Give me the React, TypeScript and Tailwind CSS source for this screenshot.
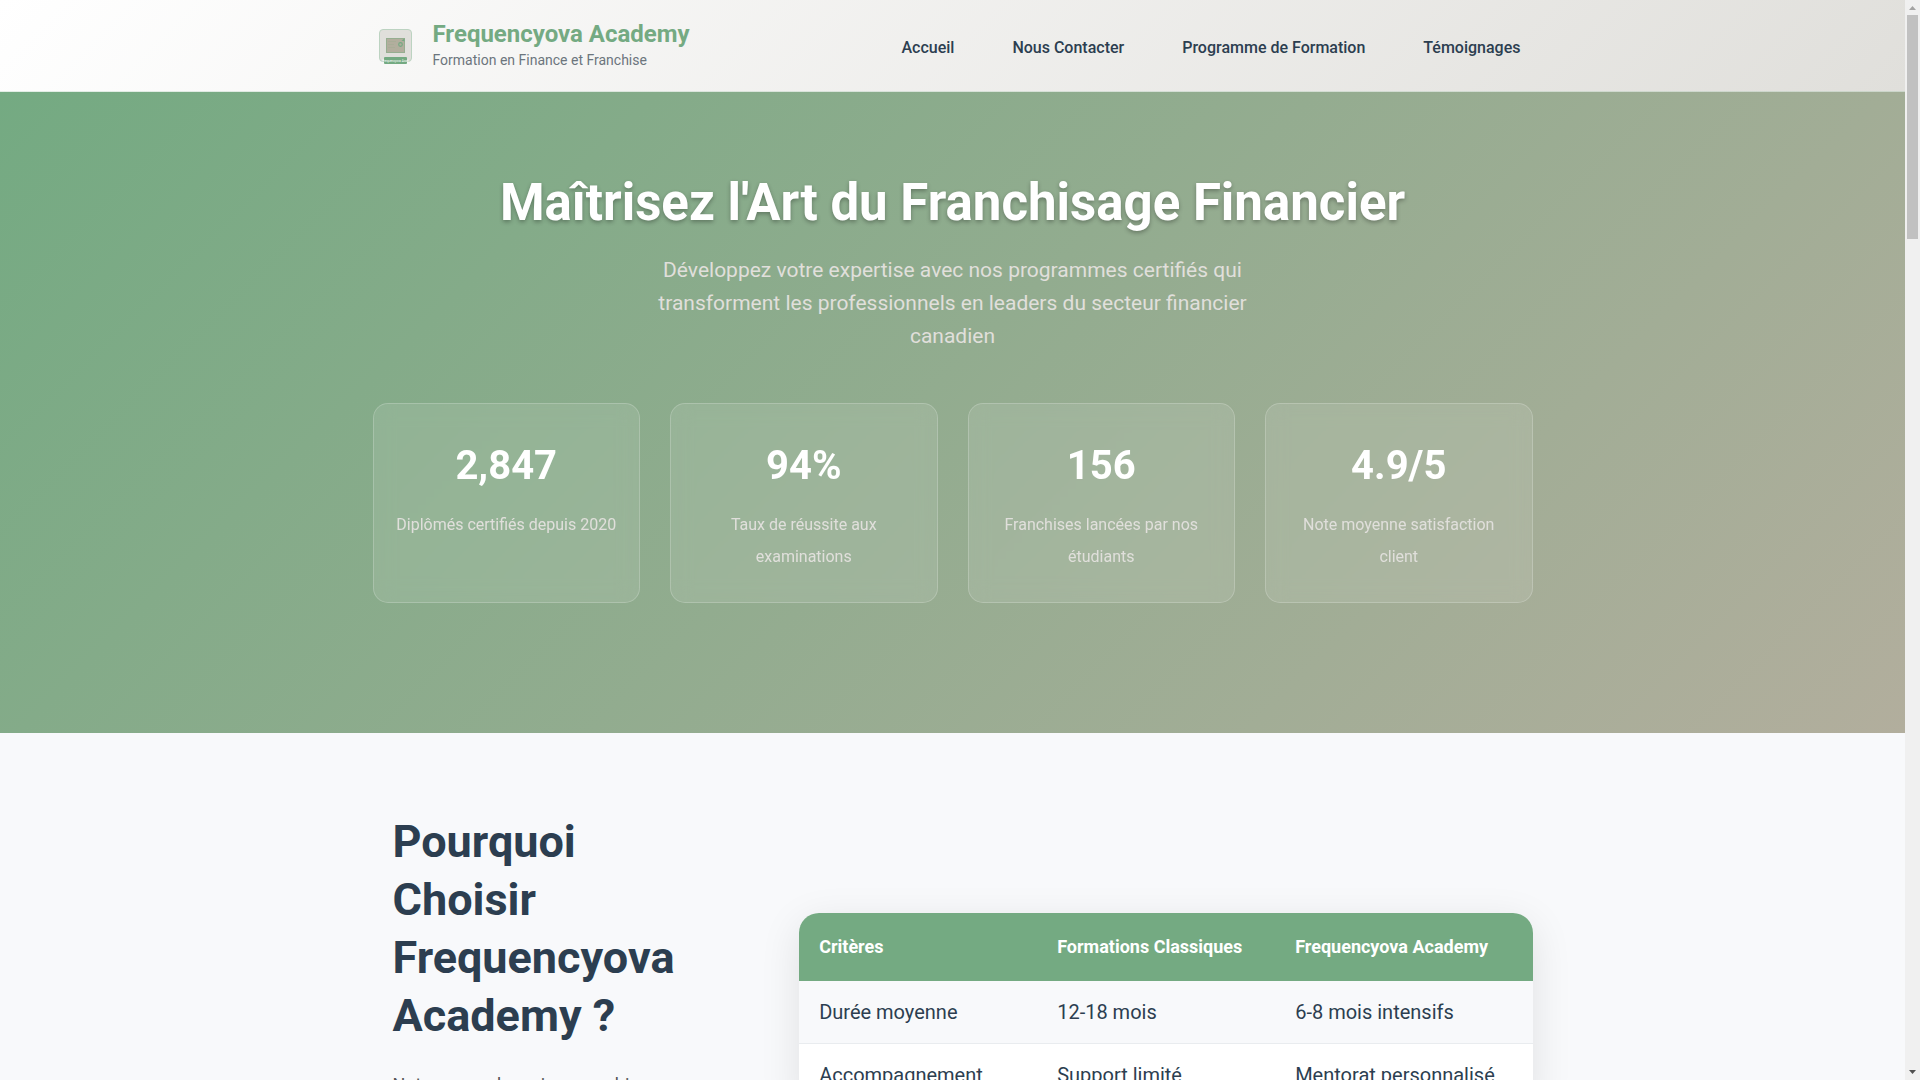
const navLinks = [
  { name: "Accueil", link: "#accueil" },
  { name: "Nous Contacter", link: "#contact" },
  { name: "Programme de Formation", link: "#programme" },
  { name: "Témoignages", link: "#temoignages" },
];

const stats = [
  { value: "2,847", label: "Diplômés certifiés depuis 2020" },
  { value: "94%", label: "Taux de réussite aux examinations" },
  { value: "156", label: "Franchises lancées par nos étudiants" },
  { value: "4.9/5", label: "Note moyenne satisfaction client" },
];

const rows = [
  ["Durée moyenne", "12-18 mois", "6-8 mois intensifs"],
  ["Accompagnement", "Support limité", "Mentorat personnalisé"],
];

const Logo = () => (
  <svg viewBox="0 0 45 45" className="h-[45px] w-[45px] shrink-0" aria-hidden="true">
    <rect x="6.5" y="6.5" width="32" height="32" rx="3.5" fill="#e0dfdb" stroke="#bcd3c1" />
    <rect x="13.5" y="15.5" width="18" height="14" fill="#b2ae9d" stroke="#96ae90" />
    <path d="M15 18.5h8M15 21.5h6M15 24.5h7" stroke="#a2ad94" strokeWidth="0.6" />
    <circle cx="27.5" cy="21.5" r="1.8" fill="#b2ae9d" stroke="#74aa82" strokeWidth="1.2" />
    <path d="M28.5 17.5l3-2v3z" fill="#74aa82" />
    <rect x="11" y="34" width="23" height="7" rx="1" fill="#74aa82" />
    <text
      x="22.5"
      y="38.5"
      textAnchor="middle"
      fontSize="3"
      fill="#ffffff"
      fontFamily="Roboto, sans-serif"
    >
      Frequencyova Acad
    </text>
  </svg>
);

const Header = () => {
  return (
    <header className="border-b border-[#74aa82]/20 bg-linear-[135deg,#ffffff,#e0dfdb]">
      <div className="mx-auto flex max-w-[1200px] items-center justify-between px-5 py-5">
        <a href="#accueil" className="flex items-center gap-[15px]">
          <Logo />
          <div>
            <p className="text-2xl leading-[29px] font-bold text-[#74aa82]">
              Frequencyova Academy
            </p>
            <p className="text-sm leading-[22px] text-[#6c757d]">
              Formation en Finance et Franchise
            </p>
          </div>
        </a>
        <nav className="flex gap-[34px] pt-1">
          {navLinks.map((item) => (
            <a
              key={item.name}
              href={item.link}
              className="px-3 text-base font-medium text-[#2c3e50]"
            >
              {item.name}
            </a>
          ))}
        </nav>
      </div>
    </header>
  );
};

const Hero = () => {
  return (
    <section className="bg-linear-[135deg,#74aa82,#b2ae9d] pt-20 pb-[130px] text-center">
      <div className="mx-auto max-w-[1200px] px-5">
        <h1 className="mb-5 text-[51px] leading-[62px] font-bold text-white text-shadow-[0_2px_4px_rgba(0,0,0,0.3)]">
          Maîtrisez l'Art du Franchisage Financier
        </h1>
        <p className="mx-auto mb-[50px] max-w-[600px] text-[21px] leading-[33px] text-[#e0dfdb]">
          Développez votre expertise avec nos programmes certifiés qui
          transforment les professionnels en leaders du secteur financier
          canadien
        </p>
        <div className="grid grid-cols-4 gap-[30px]">
          {stats.map((item) => (
            <div
              key={item.value}
              className="rounded-[15px] border border-white/20 bg-white/10 px-5 pt-[30px] pb-[29px] backdrop-blur-[10px]"
            >
              <p className="mb-[11px] text-[40px] leading-16 font-bold text-white">
                {item.value}
              </p>
              <p className="text-base leading-8 text-[#e0dfdb]">{item.label}</p>
            </div>
          ))}
        </div>
      </div>
    </section>
  );
};

const Comparison = () => {
  return (
    <section className="py-20">
      <div className="mx-auto grid max-w-[1200px] grid-cols-[1fr_2fr] items-start gap-[60px] px-5">
        <div className="px-5">
          <h2 className="mb-6 text-[45px] leading-[58px] font-bold">
            Pourquoi Choisir Frequencyova Academy ?
          </h2>
          <p className="text-lg leading-8 text-[#555555]">
            Notre approche unique combine
          </p>
        </div>
        <div className="mt-[100px] overflow-hidden rounded-[20px] bg-white shadow-[0_10px_40px_rgba(0,0,0,0.1)]">
          <table className="w-full table-fixed text-left">
            <thead className="bg-[#74aa82] text-lg leading-7 text-white">
              <tr>
                <th className="w-[238px] p-5 font-bold">Critères</th>
                <th className="w-[238px] p-5 font-bold">Formations Classiques</th>
                <th className="p-5 font-bold">Frequencyova Academy</th>
              </tr>
            </thead>
            <tbody className="text-xl leading-8">
              {rows.map((row) => (
                <tr
                  key={row[0]}
                  className="border-b border-[#e9ecef] odd:bg-[#f8f9fb]"
                >
                  {row.map((cell) => (
                    <td key={cell} className="px-5 py-[15px]">
                      {cell}
                    </td>
                  ))}
                </tr>
              ))}
            </tbody>
          </table>
        </div>
      </div>
    </section>
  );
};

const Scrollbar = () => (
  <div className="flex w-[15px] shrink-0 flex-col items-center bg-[#f0f0f0]" aria-hidden="true">
    <svg viewBox="0 0 15 15" className="h-[15px] w-full">
      <path d="M4 10h7L7.5 6z" fill="#a3a3a3" />
    </svg>
    <div className="h-56 w-[11px] bg-[#c1c1c1]" />
    <svg viewBox="0 0 15 15" className="mt-auto h-[15px] w-full">
      <path d="M4 5h7L7.5 9z" fill="#505050" />
    </svg>
  </div>
);

const App = () => {
  return (
    <div className="flex h-screen overflow-hidden bg-[#f8f9fb] font-[Roboto,sans-serif] text-[#2c3e50]">
      <div className="min-w-0 flex-1 overflow-hidden">
        <Header />
        <main>
          <Hero />
          <Comparison />
        </main>
      </div>
      <Scrollbar />
    </div>
  );
};

export default App;
